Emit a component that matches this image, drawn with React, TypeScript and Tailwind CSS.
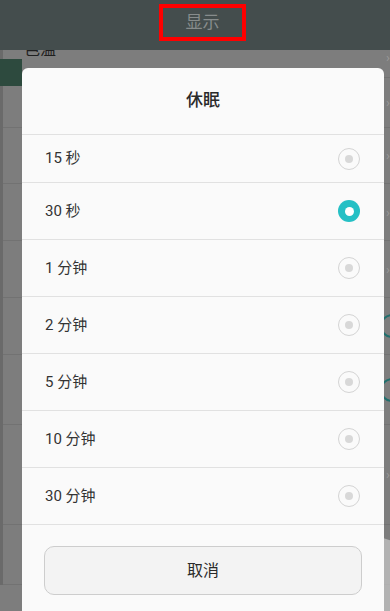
import React, { useState } from "react";

const options = ["15 秒", "30 秒", "1 分钟", "2 分钟", "5 分钟", "10 分钟", "30 分钟"];

// rows of the dimmed settings page behind the dialog
const bgRows: { h: string; mark?: "chevron" | "switch" }[] = [
  { h: "h-[40px]", mark: "chevron" },
  { h: "h-[50px]", mark: "chevron" },
  { h: "h-[56px]", mark: "chevron" },
  { h: "h-[57px]", mark: "chevron" },
  { h: "h-[57px]", mark: "chevron" },
  { h: "h-[57px]", mark: "switch" },
  { h: "h-[70px]", mark: "switch" },
  { h: "h-[100px]", mark: "chevron" },
  { h: "h-[60px]" },
];

const Radio = ({ checked }: { checked: boolean }) =>
  checked ? (
    <span className="flex h-[22px] w-[22px] items-center justify-center rounded-full bg-[#25c0c5]">
      <span className="h-[9px] w-[9px] rounded-full bg-white" />
    </span>
  ) : (
    <span className="flex h-[22px] w-[22px] items-center justify-center rounded-full border border-[#d4d4d4] bg-[#fafafa]">
      <span className="h-[8px] w-[8px] rounded-full bg-[#d8d8d8]" />
    </span>
  );

export default function App() {
  const [selected, setSelected] = useState(1);

  return (
    <div
      className="relative h-[611px] w-[390px] overflow-hidden bg-[#7d7d7d]"
      style={{ fontFamily: "Roboto, 'Noto Sans CJK SC', sans-serif" }}
    >
      {/* Dimmed page behind */}
      <div className="relative z-10 flex h-[50px] items-start justify-center bg-[#444d4d] pl-[15px] pt-[4px]">
        <div className="flex h-[37px] w-[87px] items-center justify-center border-4 border-[#ff0000]">
          <span className="text-[17px] text-[#878c8c]">显示</span>
        </div>
      </div>
      <div className="-mt-[12px] flex flex-col border-l-[3px] border-[#6a6a6a]">
        {bgRows.map((r, i) => (
          <div
            key={i}
            className={`${r.h} flex items-start justify-between border-b border-[#727272] pl-[21px] pr-0`}
          >
            <span className="pt-[1px] text-[16px] leading-[22px] text-[#1f1f1f]">
              {i === 0 ? "色温" : ""}
            </span>
            {r.mark === "chevron" && (
              <span className="self-center text-[13px] leading-none text-[#9a9a9a]">›</span>
            )}
            {r.mark === "switch" && (
              <span className="mr-[-14px] h-[24px] w-[24px] self-center rounded-full border-2 border-[#1f6f6d]" />
            )}
          </div>
        ))}
      </div>
      <div className="absolute bottom-[-10px] right-[-26px] h-[84px] w-[84px] rounded-full bg-[#c9c9c9]/70" />
      <div className="absolute left-0 top-[59px] h-[27px] w-[22px] bg-[#2d4a3e]" />

      {/* Dialog */}
      <div className="absolute left-[22px] top-[68px] bottom-[-10px] flex w-[362px] flex-col rounded-t-[6px] bg-[#fafafa]">
        <div className="flex h-[67px] items-center justify-center border-b border-[#e1e1e1]">
          <span className="text-[17px] font-medium text-[#2a2a2a]">休眠</span>
        </div>
        {options.map((o, i) => (
          <button
            key={o}
            onClick={() => setSelected(i)}
            className={`flex ${i === 0 ? "h-[48px]" : "h-[57px]"} items-center justify-between border-b border-[#e1e1e1] pl-[23px] pr-[24px] text-left`}
          >
            <span className="text-[15px] text-[#333333]">{o}</span>
            <Radio checked={selected === i} />
          </button>
        ))}
        <div className="px-[22px] pt-[21px]">
          <button className="flex h-[49px] w-full items-center justify-center rounded-[10px] border border-[#cdcdcd] bg-[#f3f3f3] text-[16px] text-[#2a2a2a]">
            取消
          </button>
        </div>
      </div>
    </div>
  );
}
